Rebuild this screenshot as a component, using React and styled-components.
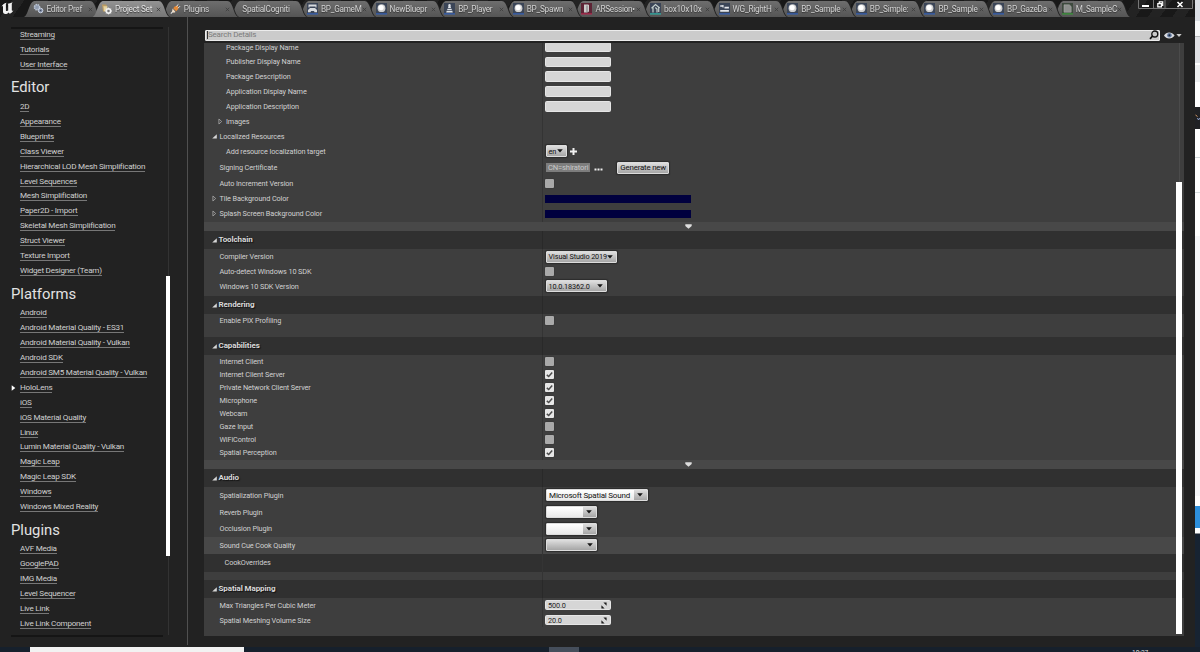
import React from 'react';
import styled, { createGlobalStyle, css } from 'styled-components'

const tabs = [
  { label: 'Editor Pref', icon: 'prefs' },
  { label: 'Project Set', icon: 'project', active: true },
  { label: 'Plugins', icon: 'plug' },
  { label: 'SpatialCogniti' },
  { label: 'BP_GameM', icon: 'gamemode' },
  { label: 'NewBluepr', icon: 'actor' },
  { label: 'BP_Player', icon: 'pawn' },
  { label: 'BP_Spawn', icon: 'actor' },
  { label: 'ARSession•', icon: 'session' },
  { label: 'box10x10x', icon: 'mesh' },
  { label: 'WG_RightH', icon: 'widget' },
  { label: 'BP_Sample', icon: 'actor' },
  { label: 'BP_Simple:', icon: 'actor' },
  { label: 'BP_Sample', icon: 'actor' },
  { label: 'BP_GazeDa', icon: 'actor' },
  { label: 'M_SampleC', icon: 'material' },
]

const menu = [
  { items: ['Streaming', 'Tutorials', 'User Interface'] },
  {
    title: 'Editor',
    items: ['2D', 'Appearance', 'Blueprints', 'Class Viewer', 'Hierarchical LOD Mesh Simplification', 'Level Sequences',
      'Mesh Simplification', 'Paper2D - Import', 'Skeletal Mesh Simplification', 'Struct Viewer', 'Texture Import',
      'Widget Designer (Team)'],
  },
  {
    title: 'Platforms',
    items: ['Android', 'Android Material Quality - ES31', 'Android Material Quality - Vulkan', 'Android SDK',
      'Android SM5 Material Quality - Vulkan', 'HoloLens', 'iOS', 'iOS Material Quality', 'Linux',
      'Lumin Material Quality - Vulkan', 'Magic Leap', 'Magic Leap SDK', 'Windows', 'Windows Mixed Reality'],
  },
  {
    title: 'Plugins',
    items: ['AVF Media', 'GooglePAD', 'IMG Media', 'Level Sequencer', 'Live Link', 'Live Link Component'],
  },
]

const capabilities = [
  ['Internet Client', false],
  ['Internet Client Server', true],
  ['Private Network Client Server', true],
  ['Microphone', true],
  ['Webcam', true],
  ['Gaze Input', false],
  ['WiFiControl', false],
  ['Spatial Perception', true],
]

function TabIcon({ kind }) {
  if (kind === 'prefs') {
    return (
      <svg width="11" height="12" viewBox="0 0 11 12">
        <circle cx="4" cy="4.2" r="2.6" fill="#8f9bb0" stroke="#bcc6d4" strokeWidth="1.5" strokeDasharray="1.4 .7" />
        <circle cx="7.6" cy="7.5" r="2.3" fill="#8794ae" stroke="#c9d1df" strokeWidth="1" />
        <circle cx="7.6" cy="7.5" r=".8" fill="#424a5c" />
      </svg>
    )
  }
  if (kind === 'project') {
    return (
      <svg width="11" height="12" viewBox="0 0 11 12">
        <path d="M1 1.5h4l1 1v2l-2 4H2z" fill="#bd9d62" />
        <path d="M2.4 3.2h4v2l-2 3H3z" fill="#e6d4a2" />
        <circle cx="7.5" cy="8" r="2.2" fill="none" stroke="#f1f1f1" strokeWidth="1.6" />
        <path d="M7.5 4.6v6.8M4.1 8h6.8M5.2 5.7l4.6 4.6M9.8 5.7l-4.6 4.6" stroke="#f1f1f1" strokeWidth=".9" />
        <circle cx="7.5" cy="8" r="1.2" fill="#777" />
      </svg>
    )
  }
  if (kind === 'plug') {
    return (
      <svg width="11" height="12" viewBox="0 0 11 12">
        <path d="M.8 10.6 3.4 8" stroke="#ddd" strokeWidth="1.1" />
        <path d="M2.6 5.6 5.5 8.9 4 9.8 2 9z" fill="#f1dfc8" />
        <path d="M3.2 5.2 5 3.2 7.8 2.8 8.5 5.7 6.2 8.2z" fill="#e58936" />
        <path d="M6.3 3.4 8.4 1.4M8 5.2l2-2" stroke="#e8e8e8" strokeWidth="1" />
      </svg>
    )
  }
  const bar = { session: '#b3284f', mesh: '#2fb5a8', material: '#3b9b3b' }[kind] || '#3562b8'
  return (
    <svg width="11" height="12" viewBox="0 0 11 12">
      <rect x="0" y="0" width="11" height="11" fill={kind === 'session' ? '#5d2435' : kind === 'material' ? '#3e4a3e' : '#3b4557'} />
      <rect x="0" y="10.3" width="11" height="1.2" fill={bar} />
      {kind === 'actor' && <><circle cx="5.5" cy="5.2" r="3.9" fill="#cfcfcf" /><circle cx="5.1" cy="4.6" r="2.6" fill="#fff" /></>}
      {kind === 'gamemode' && <path d="M1.5 1.5h8v3h-1v-1h-6v1h-1zM3 5h5l2 2v2.2H7.5L7 8H4l-.5 1.2H1V7z" fill="#d7dade" />}
      {kind === 'pawn' && <path d="M5.5 1a1.3 1.3 0 0 1 1 2.1L7 5H4l.5-1.9A1.3 1.3 0 0 1 5.5 1zM3.5 5.7h4l.4 1.3H3.1zM2.7 7.7h5.6l.5 1.7H2.2z" fill="#dfe3e8" />}
      {kind === 'session' && <><path d="M3 1.4h4l1 .7v6.5L6 9.5H3z" fill="#ccc" /><path d="M6 2.5v7" stroke="#777" strokeWidth="1" /></>}
      {kind === 'mesh' && <path d="M1.5 5.2 5.5 1.6 9.7 5M3 4.5v5M5.3 4.5 7 6v3.6M8.7 4.5V9" fill="none" stroke="#c3cfcc" strokeWidth="1.2" />}
      {kind === 'widget' && <><path d="M1.2 3h3M5.5 4.6h4.4M1.2 7.8h8.7" stroke="#e4e6ea" strokeWidth="1.7" /><path d="M4 2v2.6" stroke="#e4e6ea" /></>}
      {kind === 'material' && <path d="M2 1.8h5.3l1.9 1.8v5.6H2z" fill="#8d8f8d" stroke="#b0b3b0" strokeWidth=".5" />}
    </svg>
  )
}

const Caret = () => (
  <svg width="6" height="4" viewBox="0 0 6 4"><path d="M.2.3h5.6L3 3.6z" fill="#161616" /></svg>
)

const OpenArrow = () => (
  <svg width="5" height="5" viewBox="0 0 5 5"><path d="M4.8.2v4.4H.2z" fill="#d6d6d6" /></svg>
)

const ClosedArrow = () => (
  <svg width="5" height="7" viewBox="0 0 5 7"><path d="M.9 1v5L3.7 3.5z" fill="none" stroke="#aaa" strokeWidth=".8" /></svg>
)

const Check = ({ on }) => (
  <Box $on={on}>
    {on && <svg width="9" height="9" viewBox="0 0 9 9"><path d="M1.8 4.9 3.7 6.5 7.2 2.6" fill="none" stroke="#4a4a4a" strokeWidth="1.5" /></svg>}
  </Box>
)

const Spin = ({ value }) => (
  <Field>
    {value}
    <svg width="6" height="7" viewBox="0 0 6 7"><path d="M2.4.5h3.2v3.2zM.4 3.3v3.2h3.2z" fill="#1c1c1c" /></svg>
  </Field>
)

function Row({ label, h = 14.9, indent = 15.5, arrow, tone, children }) {
  return (
    <RowLine $h={h} $tone={tone}>
      <NameCell $indent={indent}>
        {arrow && <ArrowSlot>{arrow === 'open' ? <OpenArrow /> : <ClosedArrow />}</ArrowSlot>}
        {label}
      </NameCell>
      <ValueCell>{children}</ValueCell>
    </RowLine>
  )
}

const Header = ({ children }) => (
  <RowLine $h={18} $tone="dark">
    <HeaderCell><OpenArrow />{children}</HeaderCell>
    <ValueCell />
  </RowLine>
)

const Footer = ({ h = 8.3 }) => (
  <FooterBand $h={h}>
    <svg width="7" height="5" viewBox="0 0 7 5"><path d="M.3.3h6.4v1.6L3.5 4.8.3 1.9z" fill="#ddd" /></svg>
  </FooterBand>
)

function TitleBar() {
  return (
    <Title>
      <Logo width="15" height="14" viewBox="0 0 15 14">
        <path d="M1.5 6C2.3 3.8 4 2.3 6.8 1.8 5.9 2.5 5.9 3.2 5.9 4v5.2c0 1 1.3 1.2 2.3.4V4c0-.8-.3-1-.8-1.1C9 2.6 11 2.2 12.8 1.3c-.9.8-1 1.5-1 2.3v5.3c0 .9.7 1.1 1.7.6-1 1.6-2.2 2.6-3.8 3.3L8.6 11.4C7.6 12.5 6.6 13 5.4 13 3.7 13 3 12 3 10.6V5.7C3 4.7 2.2 5 1.5 6z" fill="#f2f2f2" />
      </Logo>
      <TabStrip>
        {tabs.map((tab, i) => (
          <Tab key={i} $active={tab.active} $order={tabs.length - i}>
            {tab.icon && <TabIcon kind={tab.icon} />}
            <TabLabel $plain={!tab.icon}>{tab.label}</TabLabel>
            {tab.icon && <TabClose viewBox="0 0 5 5"><path d="m.8.8 3.4 3.4M4.2.8.8 4.2" stroke="#3c3c3c" strokeWidth=".8" /></TabClose>}
          </Tab>
        ))}
      </TabStrip>
      <Controls>
        <svg width="55" height="10" viewBox="0 0 55 10">
          <path d="M.5 0v8.5h54V0M15.5 0v8.5M27 0v8.5" fill="none" stroke="#777" />
          <path d="M4 5h7v2H4z" fill="#fff" />
          <path d="M19.8 3.6h3.6v3.2h-3.6zM21.3 3.2V1.8h3.4V5.4h-1" fill="none" stroke="#fff" strokeWidth="1.2" />
          <path d="m39.5 2 5 5M44.5 2l-5 5" stroke="#fff" strokeWidth="1.6" />
        </svg>
      </Controls>
    </Title>
  )
}

function Sidebar() {
  return (
    <Side>
      <MenuList>
        {menu.map((group, i) => (
          <React.Fragment key={i}>
            {group.title && <MenuTitle>{group.title}</MenuTitle>}
            {group.items.map(item => (
              <MenuItem key={item}>
                <MenuMark>
                  {item === 'HoloLens' && <svg width="5" height="6" viewBox="0 0 5 6"><path d="M.7.2v5.6L4.3 3z" fill="#fff" /></svg>}
                </MenuMark>
                <MenuLink>{item}</MenuLink>
              </MenuItem>
            ))}
          </React.Fragment>
        ))}
      </MenuList>
      <SideTrack><SideThumb /></SideTrack>
    </Side>
  )
}

function Details() {
  return (
    <Panel>
      <SearchRow>
        <Search>
          <span>Search Details</span>
          <svg width="10" height="10" viewBox="0 0 10 10"><circle cx="5.8" cy="4" r="3" fill="none" stroke="#111" strokeWidth="1.3" /><path d="M3.6 6 1 8.8" stroke="#111" strokeWidth="1.7" /></svg>
        </Search>
        <svg width="19" height="9" viewBox="0 0 19 9">
          <path d="M0 4.5C2.2.6 8 .6 10.6 4.5 8 8.4 2.2 8.4 0 4.5z" fill="#d8dade" />
          <circle cx="5.4" cy="4.3" r="2.3" fill="#62799f" /><circle cx="5.4" cy="4.3" r="1" fill="#1e2838" />
          <path d="M12.3 3h5.4L15 6z" fill="#ccc" />
        </svg>
      </SearchRow>
      <Tree>
        <Rows>
          <Row label="Package Display Name" h={14.6} indent={22}><Field /></Row>
          <Row label="Publisher Display Name" indent={22}><Field /></Row>
          <Row label="Package Description" indent={22}><Field /></Row>
          <Row label="Application Display Name" indent={22}><Field /></Row>
          <Row label="Application Description" indent={22}><Field /></Row>
          <Row label="Images" indent={22} arrow="closed" />
          <Row label="Localized Resources" h={14.3} arrow="open" />
          <Row label="Add resource localization target" h={16.4} indent={22}>
            <Combo $w={21.5}>en<Caret /></Combo>
            <Plus width="7" height="7" viewBox="0 0 7 7"><path d="M3.5 0v7M0 3.5h7" stroke="#f0f0f0" strokeWidth="2" /></Plus>
          </Row>
          <Row label="Signing Certificate" h={16.4}>
            <Certificate>CN=shiratori</Certificate>
            <Dots width="9" height="3" viewBox="0 0 9 3"><path d="M.5 1.5h2M3.5 1.5h2M6.5 1.5h2" stroke="#eee" strokeWidth="2" /></Dots>
            <Button>Generate new</Button>
          </Row>
          <Row label="Auto Increment Version" h={15.3}><Check /></Row>
          <Row label="Tile Background Color" arrow="closed"><Swatch /></Row>
          <Row label="Splash Screen Background Color" arrow="closed"><Swatch /></Row>
          <Spacer $h={1.4} />
          <Footer h={8.5} />

          <Header>Toolchain</Header>
          <Row label="Compiler Version" h={16}><Combo $w={71.5}>Visual Studio 2019<Caret /></Combo></Row>
          <Row label="Auto-detect Windows 10 SDK" h={14}><Check /></Row>
          <Row label="Windows 10 SDK Version" h={15.1}><Combo $w={61.5}>10.0.18362.0<Caret /></Combo></Row>
          <Spacer $h={1.5} />

          <Header>Rendering</Header>
          <Row label="Enable PIX Profiling" h={14.6}><Check /></Row>
          <Spacer $h={8.5} />

          <Header>Capabilities</Header>
          {capabilities.map(([name, on]) => (
            <Row key={name} label={name} h={13.08}><Check on={on} /></Row>
          ))}
          <Spacer $h={1.2} />
          <Footer />

          <Header>Audio</Header>
          <Row label="Spatialization Plugin" h={17}>
            <Picker $w={102.5}><span>Microsoft Spatial Sound</span><Caret /></Picker>
          </Row>
          <Row label="Reverb Plugin" h={16.8}><Picker $w={51.5}><span /><Caret /></Picker></Row>
          <Row label="Occlusion Plugin" h={16.7}><Picker $w={51.5}><span /><Caret /></Picker></Row>
          <Row label="Sound Cue Cook Quality" h={16.5} tone="light"><Combo $w={51.5}><span /><Caret /></Combo></Row>
          <Row label="CookOverrides" h={18} indent={20.5} tone="dark" />
          <Spacer $h={8} />

          <Header>Spatial Mapping</Header>
          <Row label="Max Triangles Per Cubic Meter"><Spin value="500.0" /></Row>
          <Row label="Spatial Meshing Volume Size"><Spin value="20.0" /></Row>
        </Rows>
        <TreeTrack />
        <TreeThumb />
      </Tree>
    </Panel>
  )
}

function App() {
  return (
    <Screen>
      <GlobalStyle />
      <Desktop>
        <Window>
          <TitleBar />
          <Body>
            <Sidebar />
            <Details />
          </Body>
        </Window>
        <Behind>
          <Strip $h={21} $c="#dde0e6" />
          <Strip $h={15} $c="#f7f8f9" />
          <Strip $h={1} $c="#b9bbbe" />
          <Strip $h={26} $c="#e0e1e5" />
          <Strip $h={2} $c="#fff" />
          <Strip $h={17} $c="#eeeff1" />
          <Strip $h={25} $c="#fff" />
          <Strip $h={22} $c="#202124">
            <svg width="5" height="22" viewBox="0 0 5 22"><path d="m.5 8 2 1.5" stroke="#d89a62" /><path d="m2.5 11 1 2 1.5-2" fill="none" stroke="#8ea2cf" /></svg>
          </Strip>
          <Strip $h={28} $c="#fff" />
          <Strip $h={1} $c="#d3dadd" />
          <Strip $h={34} $c="#fff" />
          <Strip $h={1} $c="#d8dfe0" />
          <Strip $h={43} $c="#fff" />
          <Strip $h={260} $c="#f5f6f8" />
          <Strip $h={6} $c="#fff" />
          <Strip $h={4} $c="#fff" />
          <Strip $h={22} $c="#2d8fdc" />
          <Strip $h={5} $c="#fff" />
          <Strip $h={1} $c="#8b8f94" />
          <Strip $h={113} $c="#172332" />
        </Behind>
      </Desktop>
      <Taskbar>
        <TaskSearch />
        <TaskActive />
        <Clock>10:27</Clock>
      </Taskbar>
    </Screen>
  )
}

export default App;

const GlobalStyle = createGlobalStyle`
* { box-sizing: border-box; }
body {
  margin: 0;
  background: #222;
  overflow: hidden;
  font-family: Roboto, "Liberation Sans", sans-serif;
}
svg { display: block; flex: none; }
`

const Screen = styled.div`
display: flex;
flex-direction: column;
width: 1200px;
height: 652px;
overflow: hidden;
`

const Desktop = styled.div`
display: flex;
height: 647px;
`

const Window = styled.div`
display: flex;
flex-direction: column;
width: 1195px;
background: #222;
`

const Title = styled.div`
display: flex;
height: 17px;
background: repeating-linear-gradient(125deg, #181818 0 10px, #232323 10px 20px);
`

const Logo = styled.svg`
margin: 1px 9px 0 0;
`

const TabStrip = styled.div`
display: flex;
padding-top: 1px;
flex: 1;
`

const Tab = styled.div`
position: relative;
z-index: ${p => p.$active ? 40 : p.$order};
display: flex;
align-items: center;
flex: none;
width: 77px;
height: 16px;
margin-right: -8.4px;
padding-left: 8.5px;
filter: drop-shadow(1px 0 0.5px #222);
font-size: 8.2px;
letter-spacing: -0.25px;
color: ${p => p.$active ? '#e4e4e4' : '#d2d2d2'};

&::before {
  content: '';
  position: absolute;
  inset: 0;
  z-index: -1;
  background: ${p => p.$active ? 'linear-gradient(#939393, #767676)' : 'linear-gradient(#6e6e6e, #555)'};
  clip-path: path('M0 16C4 15 5 1 10 0H66C72 0 72 14 77 16Z');
}
`

const TabLabel = styled.span`
width: ${p => p.$plain ? '54px' : '40px'};
margin-left: ${p => p.$plain ? '4px' : '3px'};
margin-top: -1px;
white-space: nowrap;
text-shadow: 0 1px 1px #333;
`

const TabClose = styled.svg`
width: 5px;
height: 5px;
margin-left: 1px;
`

const Controls = styled.div`
width: 57px;
flex: none;
`

const Body = styled.div`
display: flex;
flex: 1;
`

const Side = styled.div`
display: flex;
width: 188px;
height: 628px;
border-right: 1px solid #505050;
padding-top: 9.5px;
`

const MenuList = styled.div`
width: 152px;
height: 610px;
margin-left: 11px;
overflow: hidden;
border-top: 2px solid #151515;
border-bottom: 2px solid #151515;
`

const MenuItem = styled.div`
display: flex;
align-items: center;
height: 14.93px;
padding-bottom: 2px;
`

const MenuMark = styled.div`
width: 9px;
`

const MenuLink = styled.span`
font-size: 8.1px;
letter-spacing: -0.23px;
line-height: 9px;
color: #d0d0d0;
white-space: nowrap;
border-bottom: 1px solid #777;
`

const MenuTitle = styled.div`
display: flex;
align-items: center;
height: 27.2px;
padding-top: 1px;
font-size: 14.8px;
color: #e3e3e3;
`

const SideTrack = styled.div`
display: flex;
justify-content: center;
width: 4px;
height: 608px;
margin-left: 3px;
padding-top: 249px;
background: linear-gradient(#333, #333) center / 1px 100% no-repeat;
`

const SideThumb = styled.div`
width: 4px;
height: 280px;
background: #fff;
`

const Panel = styled.div`
display: flex;
flex-direction: column;
margin: 12.5px 0 0 16px;
width: 980px;
`

const SearchRow = styled.div`
display: flex;
align-items: center;
gap: 4px;
height: 11.5px;
`

const Search = styled.div`
display: flex;
align-items: center;
justify-content: space-between;
width: 954.5px;
height: 11.5px;
margin-left: 1px;
padding: 0 0 0 1px;
border: 1px solid #ececec;
border-radius: 1px;
background: #cbcbcb;
font-size: 8px;
letter-spacing: -0.2px;
color: #7c7c7c;

span {
  border-left: 1px solid #333;
  line-height: 8px;
}
`

const Tree = styled.div`
position: relative;
height: 592.5px;
margin-top: 2px;
overflow: hidden;
background: #3e3e3e;
`

const Rows = styled.div`
margin-top: -3.2px;
`

const tones = { dark: '#303030', light: '#484848' }

const RowLine = styled.div`
display: flex;
height: ${p => p.$h}px;
background: ${p => tones[p.$tone] || '#3e3e3e'};
`

const NameCell = styled.div`
display: flex;
align-items: center;
width: 339px;
padding-left: ${p => p.$indent}px;
border-right: 1px solid #343434;
font-size: 7.3px;
letter-spacing: -0.11px;
color: #d0d0d0;
white-space: nowrap;
`

const ArrowSlot = styled.span`
width: 8px;
margin-left: -8px;
`

const HeaderCell = styled.div`
display: flex;
align-items: center;
gap: 2px;
width: 339px;
padding-left: 7.5px;
border-right: 1px solid #292929;
font-size: 8px;
font-weight: 700;
letter-spacing: -0.1px;
color: #dadada;
text-shadow: 1px 1px 1px #111;

svg { margin-top: 2px; }
`

const ValueCell = styled.div`
display: flex;
align-items: center;
padding-left: 2px;
`

const Spacer = styled.div`
height: ${p => p.$h}px;
background: linear-gradient(90deg, transparent 338px, #343434 338px 339px, transparent 339px);
`

const FooterBand = styled.div`
display: flex;
align-items: center;
height: ${p => p.$h}px;
padding-left: 481px;
background: #484848;
`

const Field = styled.div`
display: flex;
align-items: center;
justify-content: space-between;
width: 65.5px;
height: 10.5px;
padding: 0 3px 0 2px;
border: 1px solid #e6e6e6;
border-radius: 1.5px;
background: #d6d6d6;
font-size: 7.3px;
letter-spacing: -0.1px;
color: #222;
`

const raised = css`
display: flex;
align-items: center;
height: 12px;
margin-left: 0.6px;
border: 1px solid #dcdcdc;
border-radius: 1px;
background: linear-gradient(#dedede, #a6a6a6);
box-shadow: 0 0 1px 1px #2c2c2c;
white-space: nowrap;
color: #111;
`

const Combo = styled.div`
${raised}
justify-content: space-between;
width: ${p => p.$w}px;
padding: 0 3px 0 2px;
font-size: 7.3px;
letter-spacing: -0.13px;
`

const Picker = styled.div`
${raised}
justify-content: space-between;
width: ${p => p.$w}px;
padding-right: 4px;
font-size: 8px;
letter-spacing: -0.2px;

span {
  display: flex;
  align-items: center;
  height: 10px;
  width: ${p => p.$w - 15}px;
  padding-left: 2.5px;
  background: linear-gradient(#fff, #e9e9e9);
}
`

const Button = styled.div`
${raised}
justify-content: center;
width: 52px;
margin-left: 14.2px;
font-size: 7.9px;
letter-spacing: -0.2px;
`

const Plus = styled.svg`
margin-left: 3px;
`

const Certificate = styled.div`
width: 44px;
height: 9.5px;
margin-left: 1px;
padding-left: 2px;
background: #7d7d7d;
font-size: 7.6px;
letter-spacing: -0.15px;
line-height: 9.5px;
color: #c8c8c8;
white-space: nowrap;
`

const Dots = styled.svg`
margin: 3px 0 0 4px;
`

const Box = styled.div`
width: 9px;
height: 9px;
margin-left: 0.4px;
border-radius: 1px;
background: ${p => p.$on ? '#e6e6e6' : '#a9a9a9'};
box-shadow: 0 0 1px #222;
`

const Swatch = styled.div`
width: 146px;
height: 8px;
background: #00003e;
`

const TreeTrack = styled.div`
position: absolute;
top: 0;
right: 4px;
width: 1px;
height: 139px;
background: #4b4b4b;
`

const TreeThumb = styled.div`
position: absolute;
top: 138.5px;
right: 2px;
width: 6px;
height: 452.5px;
background: #fff;
`

const Behind = styled.div`
display: flex;
flex-direction: column;
width: 5px;
overflow: hidden;
`

const Strip = styled.div`
flex: none;
height: ${p => p.$h}px;
background: ${p => p.$c};
`

const Taskbar = styled.div`
display: flex;
height: 5px;
overflow: hidden;
background: #16202c;
`

const TaskSearch = styled.div`
width: 214px;
margin-left: 30px;
background: #f2f2f2;
`

const TaskActive = styled.div`
width: 30px;
margin-left: 305px;
background: #454e5b;
`

const Clock = styled.div`
margin: 3px 0 0 553px;
font-size: 6.5px;
line-height: 7px;
color: #ddd;
`
